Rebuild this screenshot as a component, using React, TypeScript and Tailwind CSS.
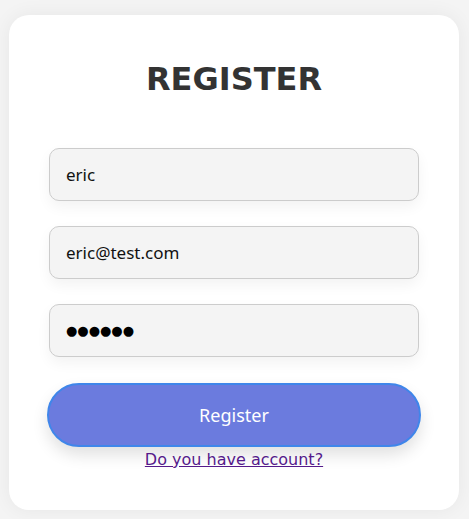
import React from "react";

export default function App() {
  return (
    <div className="min-h-[519px] bg-[#f4f4f4] pt-[15px] px-[9px] pb-[9px]">
      <div className="w-[450px] h-[495px] bg-white rounded-[20px] shadow-[0_0_20px_rgba(0,0,0,0.06)] px-10 pt-[46px] flex flex-col">
        <h1 className="text-center text-[32px] font-bold text-[#333] font-['DejaVu_Sans',sans-serif] leading-[37px]">
          REGISTER
        </h1>

        <div className="mt-[50px] flex flex-col gap-[25px]">
          <input
            type="text"
            defaultValue="eric"
            className="h-[53px] w-full rounded-[10px] border border-[#ccc] bg-[#f4f4f4] px-4 text-[17px] text-[#111] font-['Noto_Sans',sans-serif] shadow-[0_6px_14px_rgba(0,0,0,0.05)] outline-none"
          />
          <input
            type="email"
            defaultValue="eric@test.com"
            className="h-[53px] w-full rounded-[10px] border border-[#ccc] bg-[#f4f4f4] px-4 text-[17px] text-[#111] font-['Noto_Sans',sans-serif] shadow-[0_6px_14px_rgba(0,0,0,0.05)] outline-none"
          />
          <input
            type="text"
            aria-label="password"
            defaultValue="●●●●●●"
            className="h-[53px] w-full rounded-[10px] border border-[#ccc] bg-[#f4f4f4] px-4 text-[13px] text-black font-['DejaVu_Sans',sans-serif] shadow-[0_6px_14px_rgba(0,0,0,0.05)] outline-none"
          />
        </div>

        <button className="mt-[26px] -mx-0.5 h-16 rounded-full border-2 border-[#3f86ea] bg-[#6b7bde] text-white text-[18px] font-['Noto_Sans',sans-serif] shadow-[0_8px_16px_rgba(0,0,0,0.12)]">
          Register
        </button>

        <div className="text-center">
          <a
            href="#login"
            className="text-[16px] text-[#551a8b] underline font-['DejaVu_Sans',sans-serif]"
          >
            Do you have account?
          </a>
        </div>
      </div>
    </div>
  );
}
